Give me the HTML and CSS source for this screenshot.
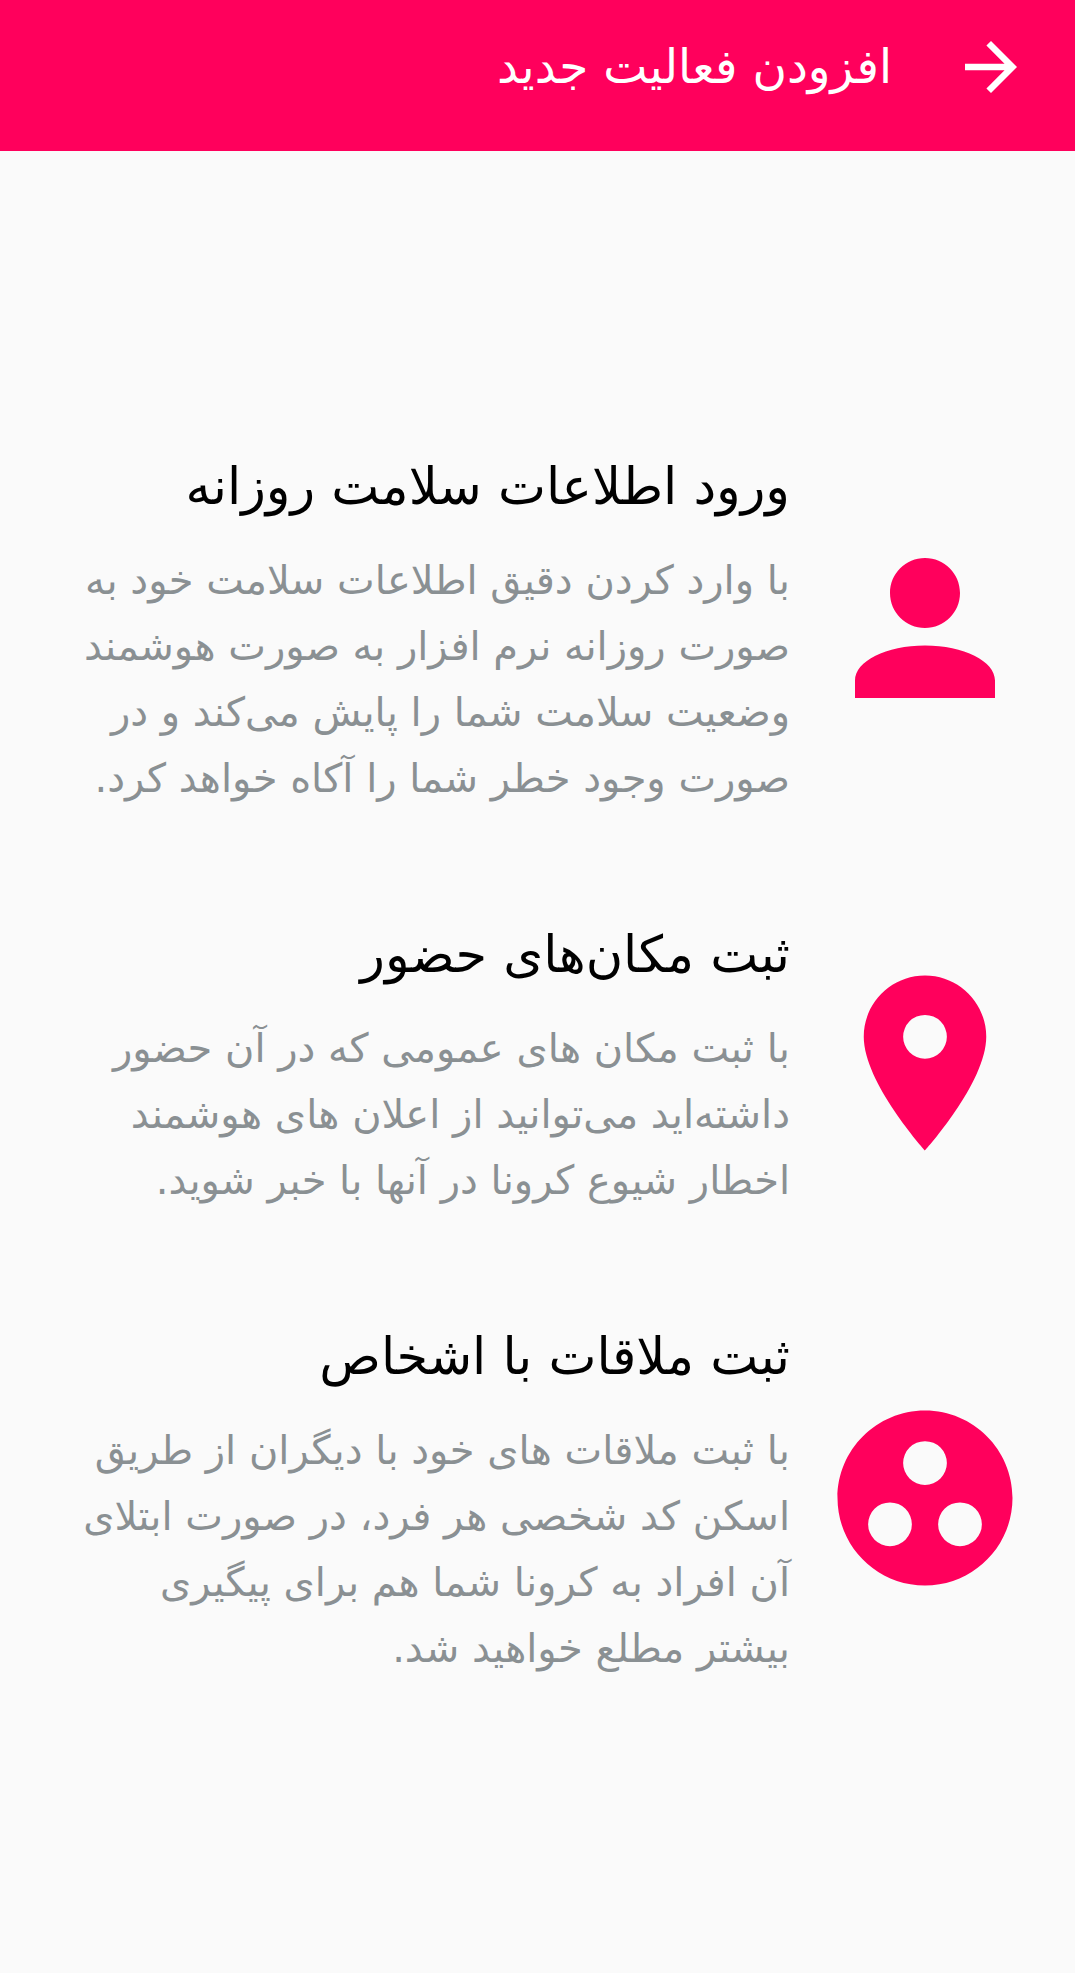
FILE: index.html
```html
<!DOCTYPE html>
<html lang="fa" dir="rtl">
<head>
    <meta charset="UTF-8">
    <meta name="viewport" content="width=device-width, initial-scale=1.0">
    <title>افزودن فعالیت جدید</title>
    <link rel="stylesheet" href="styles.css">
</head>
<body>
    <header class="toolbar">
        <button type="button" class="back-btn" aria-label="بازگشت">
            <svg viewBox="0 0 24 24"><path d="M12 4l-1.41 1.41L16.17 11H4v2h12.17l-5.58 5.59L12 20l8-8z"/></svg>
        </button>
        <h1 class="toolbar-title">افزودن فعالیت جدید</h1>
    </header>

    <main class="activities">
        <a class="activity" href="#health">
            <svg class="activity-icon" viewBox="0 0 24 24"><path d="M12 12c2.21 0 4-1.79 4-4s-1.79-4-4-4-4 1.79-4 4 1.79 4 4 4zm0 2c-4.42 0-8 1.79-8 4v2h16v-2c0-2.21-3.58-4-8-4z"/></svg>
            <div class="activity-text">
                <h2 class="activity-title">ورود اطلاعات سلامت روزانه</h2>
                <p class="activity-desc">با وارد کردن دقیق اطلاعات سلامت خود به صورت روزانه نرم افزار به صورت هوشمند وضعیت سلامت شما را پایش می‌کند و در صورت وجود خطر شما را آکاه خواهد کرد.</p>
            </div>
        </a>

        <a class="activity" href="#places">
            <svg class="activity-icon" viewBox="0 0 24 24"><path d="M12 2C8.13 2 5 5.13 5 9c0 5.25 7 13 7 13s7-7.75 7-13c0-3.87-3.13-7-7-7zm0 9.5a2.5 2.5 0 0 1 0-5 2.5 2.5 0 0 1 0 5z"/></svg>
            <div class="activity-text">
                <h2 class="activity-title">ثبت مکان‌های حضور</h2>
                <p class="activity-desc">با ثبت مکان های عمومی که در آن حضور داشته‌اید می‌توانید از اعلان های هوشمند اخطار شیوع کرونا در آنها با خبر شوید.</p>
            </div>
        </a>

        <a class="activity" href="#people">
            <svg class="activity-icon" viewBox="0 0 24 24"><path d="M12 2C6.48 2 2 6.48 2 12s4.48 10 10 10 10-4.48 10-10S17.52 2 12 2zM8 17.5a2.5 2.5 0 0 1 0-5 2.5 2.5 0 0 1 0 5zM9.5 8a2.5 2.5 0 0 1 5 0 2.5 2.5 0 0 1-5 0zm6.5 9.5a2.5 2.5 0 0 1 0-5 2.5 2.5 0 0 1 0 5z"/></svg>
            <div class="activity-text">
                <h2 class="activity-title">ثبت ملاقات با اشخاص</h2>
                <p class="activity-desc">با ثبت ملاقات های خود با دیگران از طریق اسکن کد شخصی هر فرد، در صورت ابتلای آن افراد به کرونا شما هم برای پیگیری بیشتر مطلع خواهید شد.</p>
            </div>
        </a>
    </main>
</body>
</html>
```
FILE: styles.css
```css
* {
    margin: 0;
    padding: 0;
    box-sizing: border-box;
}

body {
    font-family: 'DejaVu Sans', sans-serif;
    background: #fafafa;
    min-height: 100vh;
    display: flex;
    flex-direction: column;
}

.toolbar {
    display: flex;
    align-items: center;
    gap: 60px;
    padding: 28px 45px 45px;
    background: #ff005c;
    color: #ffffff;
}

.back-btn {
    width: 78px;
    height: 78px;
    background: none;
    border: none;
    cursor: pointer;
}

.back-btn svg {
    display: block;
    width: 100%;
    fill: #ffffff;
}

.toolbar-title {
    font-size: 47px;
    font-weight: 400;
    line-height: 78px;
}

.activities {
    flex: 1;
    display: flex;
    flex-direction: column;
    justify-content: center;
    gap: 102px;
    padding: 2px 45px 0 76px;
}

.activity {
    display: flex;
    align-items: center;
    gap: 30px;
    color: inherit;
    text-decoration: none;
}

.activity-icon {
    flex: none;
    width: 210px;
    height: 210px;
    fill: #ff005c;
}

.activity-text {
    flex: 1;
}

.activity-title {
    font-size: 51px;
    font-weight: 400;
    line-height: 84px;
    color: #000000;
    margin-bottom: 18px;
}

.activity-desc {
    font-size: 40px;
    line-height: 66px;
    color: #8a9093;
}
```
